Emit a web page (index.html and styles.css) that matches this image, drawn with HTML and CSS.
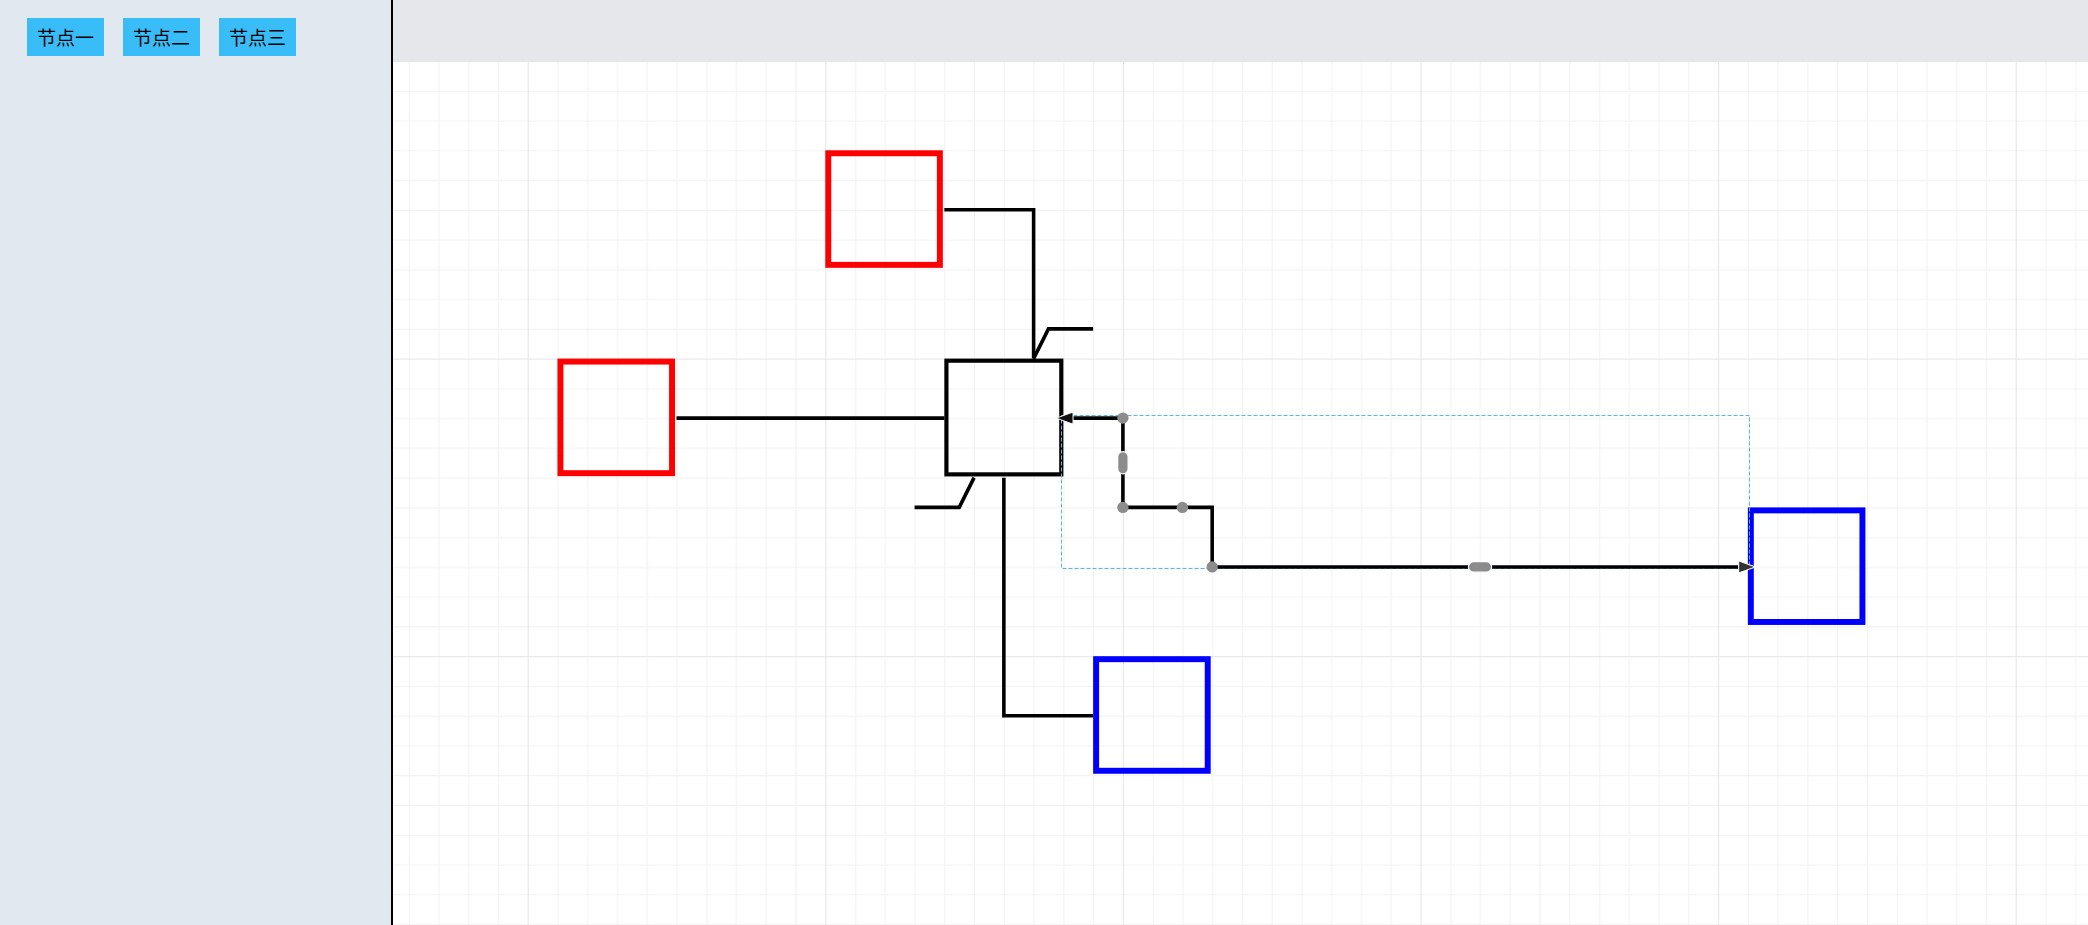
FILE: index.html
```html
<!DOCTYPE html>
<html>

<head>
    <meta charset="utf-8">
    <title>流程编辑</title>
    <link rel="stylesheet" href="styles.css">
</head>

<body>
    <div class="sidebar">
        <button class="node_btn">节点一</button>
        <button class="node_btn">节点二</button>
        <button class="node_btn">节点三</button>
    </div>
    <div class="main">
        <div class="toolbar"></div>
        <div class="canvas">
            <svg class="paper" xmlns="http://www.w3.org/2000/svg">
                <defs>
                    <!-- small cells 20x20, big cells 200x200 (paper units) -->
                    <pattern id="cell" width="20" height="20" patternUnits="userSpaceOnUse">
                        <rect width="20" height="0.68" fill="#f1f1f1" />
                        <rect width="0.68" height="20" fill="#f1f1f1" />
                    </pattern>
                    <pattern id="block" width="200" height="200" patternUnits="userSpaceOnUse">
                        <rect width="200" height="200" fill="url(#cell)" />
                        <rect width="200" height="0.68" fill="#e4e4e4" />
                        <rect width="0.68" height="200" fill="#e4e4e4" />
                    </pattern>
                </defs>

                <g transform="translate(134.7 -1) scale(1.488)">
                    <rect x="-100" y="0" width="1200" height="600" fill="url(#block)" />

                    <!-- nodes -->
                    <rect class="node red" x="202" y="62" width="75" height="75" />
                    <rect class="node red" x="22" y="202" width="75" height="75" />
                    <rect class="node blue" x="822" y="302" width="75" height="75" />
                    <rect class="node blue" x="382" y="402" width="75" height="75" />
                    <rect class="node core" x="281.4" y="201.4" width="77.2" height="76.4" />
                </g>

                <!-- selection box of the picked link -->
                <rect class="select_box" x="668.5" y="353.5" width="688" height="153" />

                <g transform="translate(134.7 -1) scale(1.488)">
                    <!-- links -->
                    <g class="link">
                        <path d="M280 100 L340 100 L340 200" />
                        <path d="M340 200 L350 180 L380 180" />
                        <path d="M300 280 L290 300 L260 300" />
                        <path d="M100 240 L280 240" />
                        <path d="M320 280 L320 440 L380 440" />
                        <path d="M366.5 240 L400 240 L400 300 L460 300 L460 340 L814 340" />
                    </g>

                    <!-- arrow heads of the picked link -->
                    <polygon class="arrow" points="355.3,240 366.5,235.9 366.5,244.1" fill="#111" />
                    <polygon class="arrow" points="825,340 813.8,335.9 813.8,344.1" fill="#333" />

                    <!-- edit handles -->
                    <g class="handle">
                        <circle cx="400" cy="240" r="3.8" />
                        <circle cx="400" cy="300" r="3.8" />
                        <circle cx="440" cy="300" r="3.8" />
                        <circle cx="460" cy="340" r="3.8" />
                        <rect class="pill" x="396.5" y="262.5" width="7" height="15" rx="3.5" />
                        <rect class="pill" x="632.2" y="336.5" width="15.6" height="7" rx="3.5" />
                    </g>
                </g>
            </svg>
        </div>
    </div>
</body>

</html>
```

FILE: styles.css
```css
html,
body {
    margin: 0;
    height: 100%
}

body {
    display: flex;
    font-family: "Noto Sans CJK SC", "Noto Sans", sans-serif;
    overflow: hidden
}

.sidebar {
    width: 393px;
    flex: none;
    background: #e2e8f0;
    border-right: 2px solid #000;
    display: flex;
    align-items: flex-start;
    gap: 19px;
    padding: 18px 0 0 27px;
    box-sizing: border-box
}

.node_btn {
    border: none;
    background: #38bdf8;
    color: #000;
    font-family: inherit;
    font-size: 19px;
    line-height: 28px;
    padding: 5px 10px;
    margin: 0;
    cursor: pointer
}

.main {
    flex: 1;
    display: flex;
    flex-direction: column;
    min-width: 0
}

.toolbar {
    height: 62px;
    flex: none;
    background: #e5e7eb
}

.canvas {
    flex: 1;
    position: relative;
    overflow: hidden;
    background: #fff
}

.paper {
    position: absolute;
    left: 0;
    top: 0;
    width: 100%;
    height: 100%
}

.link path {
    fill: none;
    stroke: #000;
    stroke-width: 2.4
}

.node {
    fill: none;
    stroke-width: 4
}

.red {
    stroke: #ff0000
}

.blue {
    stroke: #0000ff
}

.core {
    stroke: #000;
    stroke-width: 2.8
}

.arrow {
    stroke: #fff;
    stroke-width: 0.7
}

.handle circle {
    fill: #8c8c8c
}

.pill {
    fill: #8c8c8c;
    stroke: #fff;
    stroke-width: 0.8
}

.select_box {
    fill: none;
    stroke: #5fb4e4;
    stroke-width: 1;
    stroke-dasharray: 4 2
}
```
